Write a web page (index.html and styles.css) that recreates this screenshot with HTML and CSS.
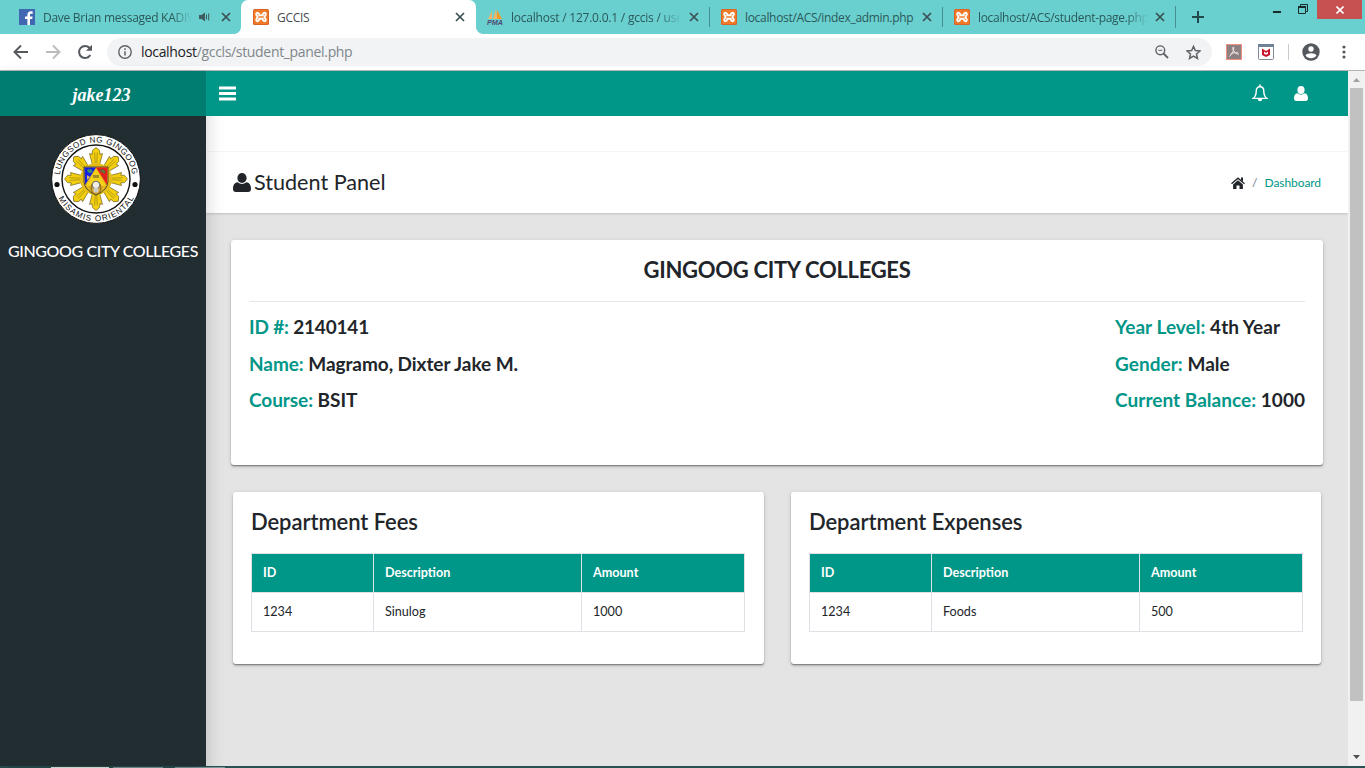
FILE: index.html
```html
<!DOCTYPE html>
<html lang="en">
<head>
<meta charset="utf-8">
<title>GCCIS</title>
<link rel="stylesheet" href="styles.css">
</head>
<body>
<svg class="defs" width="0" height="0" aria-hidden="true">
  <symbol id="close" viewBox="0 0 10 10"><path d="M1 1l8 8M9 1L1 9" fill="none" stroke="currentColor" stroke-width="1.7"/></symbol>
  <symbol id="xampp" viewBox="0 0 16 16"><rect width="16" height="16" rx="1.5" fill="#dc6424"/><rect x="1" y="1" width="14" height="14" rx="1" fill="#f07a28"/><path d="M6.300 6.300C6.300 3.200 3.200 3.200 3.200 5.200c0 1.200 1.200 1.400 1.200 2.800s-1.200 1.600-1.200 2.800c0 2 3.100 2 3.100-1.100h3.400c0 3.100 3.100 3.100 3.100 1.100 0-1.200-1.200-1.400-1.200-2.800s1.200-1.600 1.200-2.800c0-2-3.100-2-3.100 1.100z" fill="none" stroke="#fff" stroke-width="1.900"/></symbol>
  <symbol id="user" viewBox="0 0 18 19"><ellipse cx="9" cy="5" rx="4.600" ry="5" fill="currentColor"/><path d="M4.600 9.200Q9 12.800 13.400 9.200C16.900 9.600 18 12.500 18 16c0 1.900-1.100 3-2.800 3H2.800C1.100 19 0 17.900 0 16c0-3.500 1.100-6.400 4.600-6.800z" fill="currentColor"/></symbol>
</svg>

<header class="tabs">
  <div class="tab first">
    <svg class="fav" viewBox="0 0 16 16"><rect width="16" height="16" fill="#4267b2"/><path d="M11 16V10h2.200l.4-2.500H11V6c0-.8.400-1.300 1.400-1.300h1.300V2.400C13.200 2.300 12.600 2.300 12 2.300c-2.200 0-3.600 1.300-3.600 3.500v1.700H6V10h2.400v6z" fill="#fff"/></svg>
    <span class="title fade t1">Dave Brian messaged KADIV</span>
    <svg class="speaker" viewBox="0 0 12 10"><path d="M0 3h2.500L6 .5v9L2.500 7H0z" fill="#3f5d5e"/><path d="M7.500 2.500v5M9.700 1.500v7" stroke="#3f5d5e" fill="none"/></svg>
    <svg class="x"><use href="#close"/></svg>
  </div>
  <div class="tab active">
    <svg class="fav"><use href="#xampp"/></svg><span class="title t2">GCCIS</span><svg class="x"><use href="#close"/></svg>
  </div>
  <div class="tab third">
    <svg class="fav" viewBox="0 0 16 16"><path d="M1 10L5 2v8zM6 10L9 0l1 10z" fill="#efb566"/><path d="M10 10V1l5 9z" fill="#f59a23"/><text x="0" y="15.500" class="pma" textLength="16" lengthAdjust="spacingAndGlyphs">PMA</text></svg>
    <span class="title fade t3">localhost / 127.0.0.1 / gccis / use</span><svg class="x"><use href="#close"/></svg>
  </div>
  <div class="tab sep">
    <svg class="fav"><use href="#xampp"/></svg><span class="title t4">localhost/ACS/index_admin.php</span><svg class="x"><use href="#close"/></svg>
  </div>
  <div class="tab sep last">
    <svg class="fav"><use href="#xampp"/></svg><span class="title fade t5">localhost/ACS/student-page.php</span><svg class="x"><use href="#close"/></svg>
  </div>
  <svg class="plus" viewBox="0 0 12 12"><path d="M6 0v12M0 6h12" stroke="#24494b" stroke-width="2"/></svg>
  <div class="window">
    <svg class="min" viewBox="0 0 8 2"><path d="M0 1h8" stroke="#182b2b" stroke-width="2"/></svg>
    <svg class="restore" viewBox="0 0 10 10"><path d="M.5 3h7v6.500h-7z M2.500 2.500V.5h7v7h-2" fill="none" stroke="#182b2b"/><path d="M0 3h8" stroke="#182b2b" stroke-width="2"/></svg>
    <div class="closewin"><svg viewBox="0 0 8 8"><path d="M.5.5l7 7M7.500.5l-7 7" stroke="#fff" stroke-width="1.600"/></svg></div>
  </div>
</header>

<div class="toolbar">
  <svg class="nav" viewBox="0 0 16 16"><path d="M15 8H2M8 1.500L1.500 8 8 14.500" fill="none" stroke="#55595e" stroke-width="1.900"/></svg>
  <svg class="nav" viewBox="0 0 16 16"><path d="M1 8h13M8 1.500L14.500 8 8 14.500" fill="none" stroke="#babcbe" stroke-width="1.900"/></svg>
  <svg class="nav" viewBox="0 0 16 16"><path d="M13.300 11A6 6 0 1 1 12.600 4" fill="none" stroke="#55595e" stroke-width="2"/><path d="M15 .8v6H9z" fill="#55595e"/></svg>
  <div class="omnibox">
    <svg class="info" viewBox="0 0 14 14"><circle cx="7" cy="7" r="6.200" fill="none" stroke="#5f6368" stroke-width="1.400"/><path d="M7 6.200v4.300M7 3.300v1.600" stroke="#5f6368" stroke-width="1.500"/></svg>
    <span class="url"><b>localhost</b>/gccls/student_panel.php</span>
    <svg class="mag" viewBox="0 0 14 14"><circle cx="5.300" cy="5.300" r="4.400" fill="none" stroke="#5f6368" stroke-width="1.400"/><path d="M8.500 8.500l4.500 4.500" stroke="#5f6368" stroke-width="1.800"/><path d="M3.300 5.300h4" stroke="#5f6368"/></svg>
    <svg class="star" viewBox="0 0 14 14"><path d="M7 1.300l1.700 3.900 4.300.4-3.200 2.800.9 4.200L7 10.400l-3.700 2.200.9-4.200L1 5.600l4.300-.4z" fill="none" stroke="#5f6368" stroke-width="1.400"/></svg>
  </div>
  <svg class="ext" viewBox="0 0 16 16"><rect x=".5" y=".5" width="15" height="15" fill="#8c8080" stroke="#ef9080"/><path d="M7 3c1.500 0 1 4.500-3.500 9.500M7 3c-.8 2 1 6 5.500 7.500M4.500 10c2-1.200 5-1.600 8-1" fill="none" stroke="#f4efef" stroke-width="1"/></svg>
  <svg class="ext second" viewBox="0 0 16 16"><rect x=".5" y=".5" width="15" height="15" rx="1" fill="#fff" stroke="#7f8a96"/><path d="M0 0h16v3H0z" fill="#6d8296"/><path d="M4 4.500l4 2.500 4-2.500V11l-4 2-4-2z" fill="#c8152c"/><path d="M6 7.500l2 1.500 2-1.500v2.200l-2 1.100-2-1.100z" fill="#fff"/></svg>
  <i class="bar"></i>
  <svg class="profile" viewBox="0 0 18 18"><circle cx="9" cy="9" r="8.700" fill="#55595e"/><circle cx="9" cy="6" r="2.700" fill="#fff"/><path d="M3.500 12.500c1-3 10-3 11 0-2.500 3.500-8.500 3.500-11 0z" fill="#fff"/></svg>
  <svg class="dots" viewBox="0 0 4 14"><circle cx="2" cy="2" r="1.600"/><circle cx="2" cy="7" r="1.600"/><circle cx="2" cy="12" r="1.600"/></svg>
</div>

<div class="viewport">
  <aside class="sidebar">
    <div class="brand"><span>jake123</span></div>
    <svg class="seal" viewBox="0 0 90 90">
      <defs>
        <path id="arc-top" d="M8.500 45a36.500 36.500 0 0 1 73 0"/>
        <path id="arc-bottom" d="M2.800 45a42.200 42.200 0 0 0 84.400 0"/>
        <g id="ray"><path d="M41.500 31l-3-11.500 2.600.8.300-3.800L45 13.500l3.600 3 .3 3.800 2.600-.8L48.500 31z" fill="#f3cf12" stroke="#5a4c10" stroke-width=".6"/><path d="M43.700 18.500l.5 11M46.300 18.500l-.5 11" stroke="#5a4c10" stroke-width=".4"/></g>
      </defs>
      <circle cx="45" cy="45" r="44.400" fill="#fff" stroke="#111" stroke-width="1"/>
      <circle cx="45" cy="45" r="34" fill="#fff" stroke="#111" stroke-width="1.400"/>
      <use href="#ray"/>
      <use href="#ray" transform="rotate(45 45 45)"/>
      <use href="#ray" transform="rotate(90 45 45)"/>
      <use href="#ray" transform="rotate(135 45 45)"/>
      <use href="#ray" transform="rotate(180 45 45)"/>
      <use href="#ray" transform="rotate(225 45 45)"/>
      <use href="#ray" transform="rotate(270 45 45)"/>
      <use href="#ray" transform="rotate(315 45 45)"/>
      <circle cx="45" cy="45" r="16" fill="#e5bd18"/>
      <path d="M33 33h24v14q0 9-12 14-12-5-12-14z" fill="#e4b51c" stroke="#333" stroke-width=".8"/>
      <path d="M33.500 33.500H45L34 51z" fill="#1522e0"/><path d="M45 33.500h11.500L56 51z" fill="#f01c1c"/>
      <path d="M45 35L35 52h20z" fill="#f4d21c"/>
      <path d="M36 36l3-1 3 2-2 2-3-.5z" fill="#398b74"/><path d="M36 41l3 2-3 3z" fill="#d9b57c"/><path d="M48 36l4-1 3 3-2 2zM51 41l4 4" fill="#6b7438" stroke="#923d26"/>
      <path d="M42 41h6v3h-6z" fill="#a58b26"/><ellipse cx="45" cy="54" rx="5" ry="6.500" fill="#d6a72c" stroke="#554422" stroke-width=".7"/><circle cx="45" cy="51" r="3.800" fill="#f2f0e2" stroke="#555" stroke-width=".8"/><circle cx="45" cy="56" r="2.600" fill="#ccc"/>
      <circle cx="6" cy="50.500" r="2.600" fill="#111"/><circle cx="84" cy="50.500" r="2.600" fill="#111"/>
      <text class="seal-text"><textPath href="#arc-top" startOffset="4" textLength="106">LUNGSOD NG GINGOOG</textPath></text>
      <text class="seal-text"><textPath href="#arc-bottom" startOffset="20" textLength="93">MISAMIS ORIENTAL</textPath></text>
    </svg>
    <div class="school"><span>GINGOOG CITY COLLEGES</span></div>
  </aside>
  <main class="page">
    <nav class="topbar">
      <svg class="burger" viewBox="0 0 17 15"><path d="M0 2h17M0 7.500h17M0 13h17" stroke="#fff" stroke-width="2.800"/></svg>
      <svg class="bell" viewBox="0 0 16 18"><path d="M1.200 14.400c2.200-1.800 3-3.600 3-7.200 0-2.800 1.500-4.400 3.800-4.400s3.800 1.600 3.800 4.400c0 3.600.8 5.400 3 7.200z" fill="none" stroke="#fff" stroke-width="1.400"/><path d="M8 .5v2" stroke="#fff" stroke-width="1.600"/><path d="M5.800 15h4.400a2.200 2.200 0 0 1-4.400 0z" fill="#fff"/></svg>
      <svg class="topuser"><use href="#user"/></svg>
    </nav>
    <div class="strip"></div>
    <section class="heading">
      <svg class="headuser"><use href="#user"/></svg>
      <h1>Student Panel</h1>
      <svg class="home" viewBox="0 0 14 12"><path d="M7 3.300l4.900 4.200V12H8.500V8.500h-3V12H2.100V7.500z" fill="#212529"/><path d="M.5 6.700L7 1.200l6.500 5.500" fill="none" stroke="#212529" stroke-width="1.400"/><path d="M10 .5h2v4l-2-1.600z" fill="#212529"/></svg>
      <span class="slash">/</span><a>Dashboard</a>
    </section>
    <div class="content">
      <section class="card info-card">
        <h2><span>GINGOOG CITY COLLEGES</span></h2>
        <div class="details">
          <div><p class="num"><em>ID #:</em> 2140141</p><p><em>Name:</em> Magramo, Dixter Jake M.</p><p><em>Course:</em> BSIT</p></div>
          <div class="right"><p><em>Year Level:</em> 4th Year</p><p><em>Gender:</em> Male</p><p><em>Current Balance:</em> 1000</p></div>
        </div>
      </section>
      <div class="row">
        <section class="card">
          <h3>Department Fees</h3>
          <table><thead><tr><th class="c1">ID</th><th class="c2">Description</th><th>Amount</th></tr></thead><tbody><tr><td>1234</td><td>Sinulog</td><td>1000</td></tr></tbody></table>
        </section>
        <section class="card">
          <h3>Department Expenses</h3>
          <table><thead><tr><th class="c1">ID</th><th class="c2">Description</th><th>Amount</th></tr></thead><tbody><tr><td>1234</td><td>Foods</td><td>500</td></tr></tbody></table>
        </section>
      </div>
    </div>
  </main>
  <div class="scroll">
    <svg viewBox="0 0 7 4"><path d="M0 4h7L3.500 0z" fill="#a0a0a0"/></svg>
    <div class="thumb"></div>
    <svg viewBox="0 0 7 4"><path d="M0 0h7L3.500 4z" fill="#505050"/></svg>
  </div>
</div>
<footer class="taskbar"><i class="w1"></i><i class="w2"></i><i class="w2"></i></footer>
</body>
</html>
```
FILE: styles.css
```css
* { box-sizing: border-box; }
body { margin: 0; width: 1365px; height: 768px; overflow: hidden; display: flex; flex-direction: column; font-family: Lato, sans-serif; font-size: 12.6px; color: #212529; background: #fff; }
svg { display: block; flex: none; }
.defs { position: absolute; }
h1, h2, h3, p { margin: 0; }

/* browser tabs */
.tabs { height: 34px; flex: none; display: flex; background: #69d0cf; font-family: "Open Sans", sans-serif; font-size: 12px; color: #2b5859; }
.tab { width: 233px; flex: none; display: flex; align-items: center; padding: 0 10px 0 12px; position: relative; }
.tab.first { width: 241px; padding-left: 19px; }
.tab.active { width: 235px; background: #fff; color: #45494d; border-radius: 7px 7px 0 0; padding-right: 11px; }
.tab.active::before, .tab.active::after { content: ""; position: absolute; bottom: 0; width: 7px; height: 7px; }
.tab.active::before { left: -7px; background: radial-gradient(circle at 0 0, #69d0cf 6.5px, #fff 7.2px); }
.tab.active::after { right: -7px; background: radial-gradient(circle at 100% 0, #69d0cf 6.5px, #fff 7.2px); }
.tab.third { padding-left: 11px; }
.tab.last { width: 234px; border-right: 1px solid #468f90; border-image: linear-gradient(transparent 7px, #468f90 7px, #468f90 27px, transparent 27px) 1; }
.tab.sep::before { content: ""; position: absolute; left: 0; top: 7px; width: 1px; height: 20px; background: #468f90; }
.fav { width: 16px; height: 16px; margin-right: 8px; }
.title { width: 172px; white-space: nowrap; }
.t1 { width: 150px; letter-spacing: -.28px; }
.t2 { letter-spacing: -.3px; }
.t3 { letter-spacing: -.22px; }
.t4, .t5 { letter-spacing: -.32px; }
.fade { -webkit-mask-image: linear-gradient(to right, #000 86%, transparent 99%); mask-image: linear-gradient(to right, #000 86%, transparent 99%); }
.x { width: 10px; height: 10px; margin-left: auto; color: #3b4f52; }
.speaker { width: 12px; height: 10px; margin-left: 6px; }
.pma { font: italic bold 7px "Liberation Sans", sans-serif; fill: #4d4b76; }
.plus { width: 12px; height: 12px; margin: 11px 0 0 16px; }
.window { margin-left: auto; display: flex; }
.min { width: 8px; height: 2px; margin: 11px 17px 0 0; }
.restore { width: 10px; height: 10px; margin: 4px 9px 0 0; }
.closewin { width: 45px; height: 19px; margin-right: 3px; background: #c75050; display: flex; align-items: center; justify-content: center; }
.closewin svg { width: 8px; height: 8px; }

/* address bar */
.toolbar { height: 37px; flex: none; display: flex; align-items: center; padding: 0 0 0 13px; border-bottom: 1px solid #b3b3b3; }
.nav { width: 16px; height: 16px; margin-right: 16px; }
.omnibox { width: 1105px; height: 28px; margin-left: -2px; border-radius: 14px; background: #f1f3f4; display: flex; align-items: center; padding: 0 11px; }
.info { width: 14px; height: 14px; }
.url { margin-left: 9px; padding-bottom: 1px; font: 14px "Open Sans", sans-serif; letter-spacing: -.33px; color: #80868b; }
.url b { font-weight: 400; color: #202124; }
.mag { width: 14px; height: 14px; margin-left: auto; }
.star { width: 15px; height: 15px; margin-left: 17px; }
.ext { width: 16px; height: 16px; margin-left: 14px; }
.second { margin-left: 16px; }
.bar { width: 1px; height: 16px; margin-left: 14px; background: #c8cacc; }
.profile { width: 18px; height: 18px; margin-left: 13px; }
.dots { width: 4px; height: 14px; margin-left: 22px; fill: #55595e; }

/* application */
.viewport { height: 695px; flex: none; display: flex; background: #e4e4e4; }
.sidebar { width: 206px; flex: none; background: #222d32; display: flex; flex-direction: column; align-items: center; box-shadow: 0 8px 17px rgba(0,0,0,.2); z-index: 1; }
.brand { width: 206px; height: 45px; background: #007d71; color: #fff; display: flex; align-items: center; justify-content: center; padding: 4px 3px 0 0; font: italic bold 18px "Liberation Serif", serif; }
.seal { width: 90px; height: 90px; margin: 18px 14px 0 0; }
.seal-text { font: 8.2px "Liberation Sans", sans-serif; fill: #111; }
.school { margin-top: 17px; line-height: 20px; color: #fff; font-size: 16px; font-weight: 500; letter-spacing: -.38px; white-space: nowrap; }
.page { width: 1142px; flex: none; }
.topbar { height: 45px; background: #009688; display: flex; align-items: center; padding: 0 40px 0 13px; position: relative; z-index: 2; }
.burger { width: 17px; height: 15px; }
.bell { width: 16px; height: 18px; margin-left: auto; margin-right: 26px; margin-bottom: 1px; }
.topuser { width: 14px; height: 15px; color: #fff; margin-bottom: 1px; }
.strip { height: 36px; background: #fff; border-bottom: 1px solid #f9f9f9; }
.heading { height: 61px; background: #fff; box-shadow: 0 1px 2px rgba(0,0,0,.16); display: flex; align-items: center; padding: 0 27px; }
.headuser { width: 18px; height: 19px; margin: 0 3px 1px 0; }
h1 { font-size: 21.6px; font-weight: 400; line-height: 26px; padding-bottom: 2px; }
.home { width: 14px; height: 12px; margin-left: auto; }
.slash { margin: 0 7px 0 7px; color: #6c757d; font-size: 12px; }
.heading a { color: #009688; font-size: 12px; letter-spacing: -.08px; }
.content { padding: 27px 25px 0; }
.card { background: #fff; border-radius: 3px; padding: 18px; box-shadow: 0 2px 2px rgba(0,0,0,.14), 0 1px 5px rgba(0,0,0,.12), 0 1px 1px rgba(0,0,0,.3); }
.info-card { height: 225px; }
h2 { height: 44px; border-bottom: 1px solid #e6e6e6; text-align: center; font-size: 22px; line-height: 23px; font-weight: 700; letter-spacing: -.29px; }
.info-card h2 { margin-bottom: 13px; }
.details { display: flex; justify-content: space-between; font-size: 19px; font-weight: 700; letter-spacing: -.06px; }
.details .right { letter-spacing: .03px; }
.details .num { letter-spacing: -.18px; }
.details p { height: 36.500px; line-height: 24px; }
.details em { font-style: normal; color: #009688; }
.row { display: grid; grid-template-columns: 531px 530px; gap: 27px; padding: 27px 2px 0; }
.row .card { height: 172px; }
h3 { height: 43px; font-size: 22px; line-height: 24px; font-weight: 600; letter-spacing: -.08px; }
table { width: 494px; table-layout: fixed; border-collapse: collapse; }
th, td { height: 39px; border: 1px solid #dee2e6; padding: 0 11px 2px; text-align: left; }
th { background: #009688; color: #fff; font-weight: 700; }
.c1 { width: 122px; }
.c2 { width: 208px; }
.scroll { width: 17px; flex: none; background: #f1f1f1; display: flex; flex-direction: column; align-items: center; padding: 7px 0; }
.scroll svg { width: 7px; height: 4px; }
.thumb { width: 13px; height: 613px; margin: 6px 0 auto; background: #c1c1c1; }
.taskbar { height: 2px; flex: none; background: #2a5153; display: flex; gap: 4px; padding: 1px 0 0 51px; }
.w1 { width: 58px; background: #eef5ee; }
.w2 { width: 50px; background: #7f9b9c; margin-right: 8px; }
```
